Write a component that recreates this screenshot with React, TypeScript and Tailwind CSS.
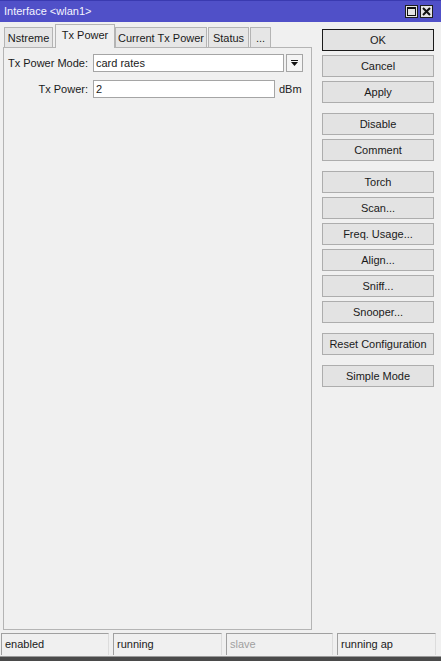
import type { ReactNode } from 'react';

const font = { fontFamily: '"Liberation Sans", Arial, sans-serif' };

function WinButton({ children }: { children: ReactNode }) {
  return (
    <div className="w-[13px] h-[13px] border border-[#1e1e1e] bg-[#e4e4e4] flex items-center justify-center">
      {children}
    </div>
  );
}

function Tab({ label, active, w, ml = 0 }: { label: string; active?: boolean; w: number; ml?: number }) {
  return (
    <div
      className={`flex items-center justify-center border border-[#b4b4b4] text-[11px] text-[#1a1a1a] ${
        active ? 'h-[24px] -mb-px border-b-0 bg-[#f0f0f0] z-10 pb-[3px]' : 'h-[20px] border-b-0 bg-[#e6e6e6] pt-[1px]'
      }`}
      style={{ width: w, marginLeft: ml }}
    >
      {label}
    </div>
  );
}

function SideButton({ label, primary }: { label: string; primary?: boolean }) {
  return (
    <div
      className={`h-[22px] w-[112px] flex items-center justify-center text-[11px] text-[#1a1a1a] bg-[#e3e3e3] border ${
        primary ? 'border-[#1a1a1a]' : 'border-[#adadad]'
      }`}
    >
      {label}
    </div>
  );
}

function StatusBox({ text, w, dim }: { text: string; w: number; dim?: boolean }) {
  return (
    <div
      className={`h-[22px] flex items-center pl-[3px] text-[11px] border-t border-l border-t-[#a0a0a0] border-l-[#a0a0a0] border-r border-r-[#dcdcdc] ${
        dim ? 'text-[#a0a0a0]' : 'text-[#1a1a1a]'
      }`}
      style={{ width: w }}
    >
      {text}
    </div>
  );
}

export default function App() {
  const groups = [
    ['OK', 'Cancel', 'Apply'],
    ['Disable', 'Comment'],
    ['Torch', 'Scan...', 'Freq. Usage...', 'Align...', 'Sniff...', 'Snooper...'],
    ['Reset Configuration'],
    ['Simple Mode'],
  ];

  return (
    <div className="w-[441px] h-[661px] flex flex-col bg-[#f0f0f0] overflow-hidden" style={font}>
      {/* Title bar */}
      <div className="h-[22px] shrink-0 bg-[#5050c8] flex items-center pl-[4px] pr-[8px] border-t border-t-[#3a3ab0]">
        <span className="text-[11px] text-[#f4f4ff] flex-1">Interface &lt;wlan1&gt;</span>
        <div className="flex gap-[2px]">
          <WinButton>
            <svg width="9" height="9" viewBox="0 0 9 9">
              <rect x="0.5" y="0.5" width="8" height="8" fill="none" stroke="#111" />
              <rect x="0" y="0" width="9" height="2" fill="#111" />
            </svg>
          </WinButton>
          <WinButton>
            <svg width="9" height="9" viewBox="0 0 9 9">
              <path d="M1 1 L8 8 M8 1 L1 8" stroke="#111" strokeWidth="2" />
            </svg>
          </WinButton>
        </div>
      </div>

      {/* Body */}
      <div className="flex-1 flex pb-[2px]">
        {/* Left: tabs + panel */}
        <div className="w-[312px] pl-[3px] flex flex-col">
          <div className="h-[25px] flex items-end pl-[1px]">
            <Tab label="Nstreme" w={49} />
            <Tab label="Tx Power" w={60} ml={2} active />
            <Tab label="Current Tx Power" w={92} />
            <Tab label="Status" w={41} ml={1} />
            <Tab label="..." w={21} ml={1} />
          </div>
          <div className="flex-1 border border-[#b4b4b4] pt-[6px] pl-[1px] flex flex-col gap-[8px]">
            <div className="flex items-center h-[18px]">
              <div className="w-[84px] text-right text-[11px] text-[#1a1a1a] pr-[1px]">Tx Power Mode:</div>
              <div className="ml-[4px] w-[191px] h-[18px] bg-white border border-[#a5a5a5] flex items-center pl-[2px] text-[11px] text-[#1a1a1a]">
                card rates
              </div>
              <div className="ml-[2px] w-[17px] h-[18px] border border-[#a5a5a5] bg-[#f4f4f4] flex items-center justify-center">
                <svg width="7" height="7" viewBox="0 0 7 7">
                  <rect x="0" y="0" width="7" height="1" fill="#111" />
                  <path d="M0 2 L7 2 L3.5 6 Z" fill="#111" />
                </svg>
              </div>
            </div>
            <div className="flex items-center h-[18px]">
              <div className="w-[84px] text-right text-[11px] text-[#1a1a1a] pr-[1px]">Tx Power:</div>
              <div className="ml-[4px] w-[182px] h-[18px] bg-white border border-[#a5a5a5] flex items-center pl-[2px] text-[11px] text-[#1a1a1a]">
                2
              </div>
              <span className="ml-[4px] text-[11px] text-[#1a1a1a]">dBm</span>
            </div>
          </div>
        </div>

        {/* Right: buttons */}
        <div className="ml-[10px] pt-[7px] flex flex-col gap-[10px]">
          {groups.map((g, i) => (
            <div key={i} className="flex flex-col gap-[4px]">
              {g.map(b => (
                <SideButton key={b} label={b} primary={b === 'OK'} />
              ))}
            </div>
          ))}
        </div>
      </div>

      {/* Status bar */}
      <div className="h-[24px] shrink-0 flex items-start pt-[1px] pl-[1px] gap-[4px]">
        <StatusBox text="enabled" w={108} />
        <StatusBox text="running" w={109} />
        <StatusBox text="slave" w={107} dim />
        <StatusBox text="running ap" w={99} />
      </div>
      <div className="h-[5px] shrink-0 border-t border-t-[#9a9a9a] bg-[#4a4a4a]" />
    </div>
  );
}
